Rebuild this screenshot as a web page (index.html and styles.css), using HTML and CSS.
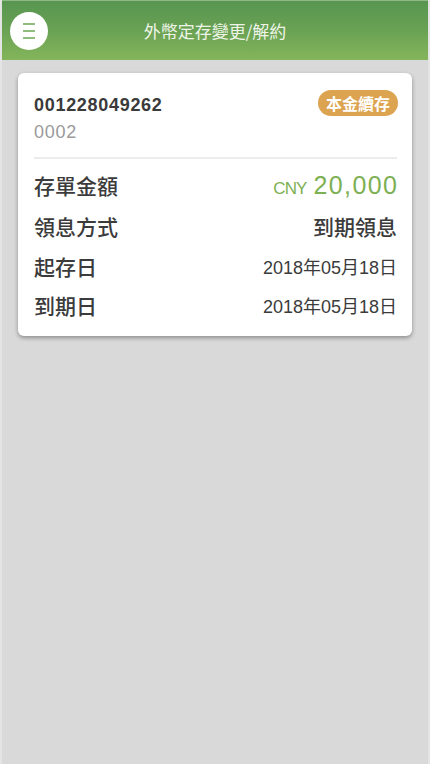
FILE: index.html
```html
<!DOCTYPE html>
<html lang="zh-Hant">
<head>
<meta charset="utf-8">
<link rel="stylesheet" href="styles.css">
</head>
<body>
<div class="app">
  <header class="topbar">
    <button class="menu-btn" aria-label="menu">
      <svg width="12" height="16" viewBox="0 0 12 16"><path d="M0 1h12M0 8h12M0 15h12" stroke="#6ea656" stroke-width="1.7" fill="none"/></svg>
    </button>
    <div class="title">外幣定存變更/解約</div>
  </header>
  <main class="content">
    <section class="card">
      <div class="card-head">
        <div class="ids">
          <div class="acct">001228049262</div>
          <div class="sub">0002</div>
        </div>
        <span class="badge">本金續存</span>
      </div>
      <div class="divider"></div>
      <div class="row row-amount">
        <span class="label">存單金額</span>
        <span class="amount"><span class="cur">CNY</span><span class="num">20,000</span></span>
      </div>
      <div class="row row-pay">
        <span class="label">領息方式</span>
        <span class="value big">到期領息</span>
      </div>
      <div class="row row-date">
        <span class="label">起存日</span>
        <span class="value">2018年05月18日</span>
      </div>
      <div class="row row-date">
        <span class="label">到期日</span>
        <span class="value">2018年05月18日</span>
      </div>
    </section>
  </main>
</div>
</body>
</html>
```
FILE: styles.css
```css
* { box-sizing: border-box; }
html, body { margin: 0; padding: 0; height: 100%; }
body {
  font-family: "Liberation Sans", Arial, "Noto Sans CJK TC", sans-serif;
  background: #e9e9e9;
}
.app {
  width: 430px;
  height: 764px;
  background: #d9d9d9;
  border-left: 2px solid #e4e4e4;
  border-right: 2px solid #e4e4e4;
  display: flex;
  flex-direction: column;
}
.topbar {
  height: 60px;
  background: linear-gradient(to bottom, #579550 0%, #6aa254 50%, #84b55a 100%);
  display: flex;
  align-items: center;
  padding-left: 8px;
  border-top: 1px solid #8cb985;
}
.menu-btn {
  width: 38px;
  height: 38px;
  border-radius: 50%;
  background: #fff;
  border: none;
  padding: 0;
  display: flex;
  align-items: center;
  justify-content: center;
}
.title {
  flex: 1;
  text-align: center;
  color: #eef5e8;
  font-size: 17px;
  margin-right: 46px;
  font-family: "Noto Sans CJK TC", sans-serif;
}
.content {
  flex: 1;
  padding: 13px 16px 0 16px;
}
.card {
  background: #fff;
  border-radius: 6px;
  box-shadow: 0 2px 4px rgba(0,0,0,0.35);
  padding: 18px 15px 12px 16px;
}
.card-head {
  display: flex;
  justify-content: space-between;
  align-items: flex-start;
}
.acct {
  font-size: 18px;
  font-weight: bold;
  color: #3a3a3a;
  line-height: 22px;
  margin-top: 3px;
  letter-spacing: 0.7px;
}
.sub {
  font-size: 18px;
  color: #9a9a9a;
  line-height: 22px;
  margin-top: 5px;
  letter-spacing: 0.7px;
}
.badge {
  background: #dca350;
  color: #fff;
  font-weight: bold;
  font-size: 16px;
  border-radius: 13px;
  padding: 0 8px;
  height: 26px;
  line-height: 26px;
  margin-right: -1px;
  margin-top: -1px;
  font-family: "Noto Sans CJK TC", sans-serif;
}
.divider {
  height: 2px;
  background: #ececec;
  margin: 14px 0 5px 0;
}
.row {
  display: flex;
  justify-content: space-between;
  align-items: center;
  color: #3b3b3b;
}
.label {
  font-size: 21px;
  font-weight: 500;
  font-family: "Noto Sans CJK TC", sans-serif;
}
.row-amount { height: 42px; }
.row-pay { height: 40px; }
.row-date { height: 39px; }
.amount {
  color: #7db052;
  white-space: nowrap;
  display: flex;
  align-items: baseline;
  gap: 7px;
}
.cur { font-size: 17px; letter-spacing: -0.9px; }
.num { font-size: 25px; letter-spacing: 1.4px; margin-right: -1.4px; }
.value { font-size: 18px; }
.value.big { font-size: 21px; font-weight: 500; font-family: "Noto Sans CJK TC", sans-serif; }
```
